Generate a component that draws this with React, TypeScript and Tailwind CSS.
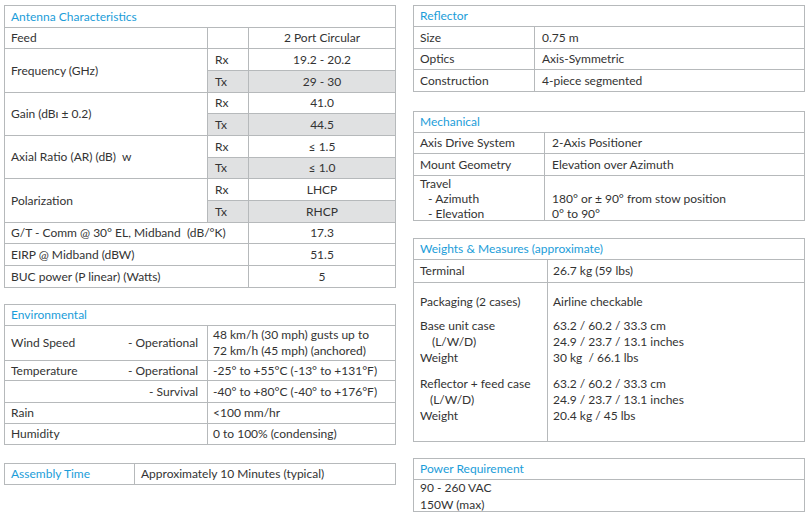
import React from "react";

// every box: border-coloured background + 1px gaps give the ruled lines
const box = "grid gap-px bg-[#b6b9bb] border border-[#b6b9bb]";
const c = "bg-white flex items-center px-[6px]";
const cc = "bg-white flex items-center justify-center";
const g = "bg-[#e0e1e2] flex items-center";
const head = "bg-white flex items-center px-[6px] text-[#1b9dd9]";

function Antenna() {
  const pairs: [string, string, string][] = [
    ["Frequency (GHz)", "19.2 - 20.2", "29 - 30"],
    ["Gain (dBı ± 0.2)", "41.0", "44.5"],
    ["Axial Ratio (AR) (dB)\u00a0 w", "≤ 1.5", "≤ 1.0"],
    ["Polarization", "LHCP", "RHCP"],
  ];
  return (
    <div
      className={`${box} grid-cols-[202px_40px_1fr] grid-rows-[21px_20px_21px_21px_20px_21px_21px_20px_21px_21px_20px_21px_21px]`}
    >
      <div className={`${head} col-span-3`}>Antenna Characteristics</div>
      <div className={c}>Feed</div>
      <div className="bg-white" />
      <div className={cc}>2 Port Circular</div>
      {pairs.map(([label, rx, tx]) => (
        <React.Fragment key={label}>
          <div className={`${c} row-span-2`}>{label}</div>
          <div className={`${c} pl-[7px]`}>Rx</div>
          <div className={cc}>{rx}</div>
          <div className={`${g} pl-[7px]`}>Tx</div>
          <div className={`${g} justify-center`}>{tx}</div>
        </React.Fragment>
      ))}
      <div className={`${c} col-span-2`}>G/T - Comm @ 30° EL, Midband&nbsp; (dB/°K)</div>
      <div className={cc}>17.3</div>
      <div className={`${c} col-span-2`}>EIRP @ Midband (dBW)</div>
      <div className={cc}>51.5</div>
      <div className={`${c} col-span-2`}>BUC power (P linear) (Watts)</div>
      <div className={cc}>5</div>
    </div>
  );
}

function Environmental() {
  return (
    <div className={`${box} grid-cols-[202px_1fr] grid-rows-[20px_34px_19px_21px_20px_20px]`}>
      <div className={`${head} col-span-2`}>Environmental</div>
      <div className={`${c} justify-between pr-[9px]`}>
        <span>Wind Speed</span>
        <span>- Operational</span>
      </div>
      <div className="bg-white flex flex-col justify-center px-[5px] leading-[16px]">
        <span>48 km/h (30 mph) gusts up to</span>
        <span>72 km/h (45 mph) (anchored)</span>
      </div>
      <div className={`${c} justify-between pr-[9px]`}>
        <span>Temperature</span>
        <span>- Operational</span>
      </div>
      <div className={`${c} pl-[5px]`}>-25° to +55°C (-13° to +131°F)</div>
      <div className={`${c} justify-end pr-[9px]`}>- Survival</div>
      <div className={`${c} pl-[5px]`}>-40° to +80°C (-40° to +176°F)</div>
      <div className={c}>Rain</div>
      <div className={`${c} pl-[5px]`}>&lt;100 mm/hr</div>
      <div className={c}>Humidity</div>
      <div className={`${c} pl-[5px]`}>0 to 100% (condensing)</div>
    </div>
  );
}

function Assembly() {
  return (
    <div className={`${box} grid-cols-[129px_1fr] grid-rows-[20px]`}>
      <div className={head}>Assembly Time</div>
      <div className={c}>Approximately 10 Minutes (typical)</div>
    </div>
  );
}

function Reflector() {
  const rows = [
    ["Size", "0.75 m"],
    ["Optics", "Axis-Symmetric"],
    ["Construction", "4-piece segmented"],
  ];
  return (
    <div className={`${box} grid-cols-[120px_1fr] grid-rows-[20px_21px_20px_21px]`}>
      <div className={`${head} col-span-2`}>Reflector</div>
      {rows.map(([k, v]) => (
        <React.Fragment key={k}>
          <div className={c}>{k}</div>
          <div className={`${c} pl-[7px]`}>{v}</div>
        </React.Fragment>
      ))}
    </div>
  );
}

function Mechanical() {
  return (
    <div className={`${box} grid-cols-[130px_1fr] grid-rows-[20px_20px_21px_44px]`}>
      <div className={`${head} col-span-2`}>Mechanical</div>
      <div className={c}>Axis Drive System</div>
      <div className={`${c} pl-[7px]`}>2-Axis Positioner</div>
      <div className={c}>Mount Geometry</div>
      <div className={`${c} pl-[7px]`}>Elevation over Azimuth</div>
      <div className="bg-white flex flex-col justify-center px-[6px] leading-[15px]">
        <span>Travel</span>
        <span className="pl-[8px]">- Azimuth</span>
        <span className="pl-[8px]">- Elevation</span>
      </div>
      <div className="bg-white flex flex-col justify-center pl-[7px] leading-[15px]">
        <span>&nbsp;</span>
        <span>180° or ± 90° from stow position</span>
        <span>0° to 90°</span>
      </div>
    </div>
  );
}

function Weights() {
  return (
    <div className={`${box} grid-cols-[133px_1fr] grid-rows-[20px_22px_158px]`}>
      <div className={`${head} col-span-2`}>Weights &amp; Measures (approximate)</div>
      <div className={c}>Terminal</div>
      <div className={`${c} pl-[5px]`}>26.7 kg (59 lbs)</div>
      <div className="bg-white flex flex-col px-[6px] pt-[11px] leading-[16px]">
        <span>Packaging (2 cases)</span>
        <span className="mt-[8px]">Base unit case</span>
        <span className="pl-[12px]">(L/W/D)</span>
        <span>Weight</span>
        <span className="mt-[10px]">Reflector + feed case</span>
        <span className="pl-[10px]">(L/W/D)</span>
        <span>Weight</span>
      </div>
      <div className="bg-white flex flex-col pl-[5px] pt-[11px] leading-[16px]">
        <span>Airline checkable</span>
        <span className="mt-[8px]">63.2 / 60.2 / 33.3 cm</span>
        <span>24.9 / 23.7 / 13.1 inches</span>
        <span>30 kg&nbsp; / 66.1 lbs</span>
        <span className="mt-[10px]">63.2 / 60.2 / 33.3 cm</span>
        <span>24.9 / 23.7 / 13.1 inches</span>
        <span>20.4 kg / 45 lbs</span>
      </div>
    </div>
  );
}

function Power() {
  return (
    <div className={`${box} grid-rows-[20px_31px]`}>
      <div className={head}>Power Requirement</div>
      <div className="bg-white flex flex-col justify-center px-[6px] leading-[17px]">
        <span>90 - 260 VAC</span>
        <span>150W (max)</span>
      </div>
    </div>
  );
}

export default function App() {
  return (
    <div
      className="w-[812px] h-[518px] bg-white text-[#333333] text-[12px] flex items-start gap-[17px] pt-[5px] pl-[4px] overflow-hidden"
      style={{ fontFamily: "Lato, 'Noto Sans', sans-serif" }}
    >
      <div className="w-[392px] flex flex-col">
        <Antenna />
        <div className="mt-[16px]">
          <Environmental />
        </div>
        <div className="mt-[18px]">
          <Assembly />
        </div>
      </div>
      <div className="w-[392px] flex flex-col">
        <Reflector />
        <div className="mt-[19px]">
          <Mechanical />
        </div>
        <div className="mt-[17px]">
          <Weights />
        </div>
        <div className="mt-[16px]">
          <Power />
        </div>
      </div>
    </div>
  );
}
